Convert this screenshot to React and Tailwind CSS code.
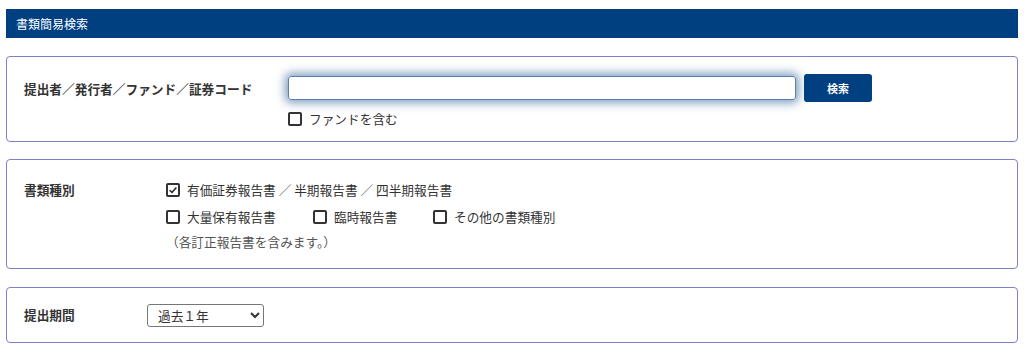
import React, { useState } from 'react';

const font = { fontFamily: '"Noto Sans CJK JP", "Noto Sans", sans-serif' };

const Check = ({ checked, onChange, label }) => (
    <label className="flex items-center gap-[7px] cursor-pointer select-none">
        <span
            onClick={onChange}
            className="w-[14px] h-[14px] border-2 border-[#333] rounded-[2px] bg-white flex items-center justify-center"
        >
            {checked && (
                <svg viewBox="0 0 12 12" className="w-[10px] h-[10px]">
                    <path d="M2 6.2 L4.8 9 L10 3" fill="none" stroke="#222" strokeWidth="1.8" />
                </svg>
            )}
        </span>
        <span>{label}</span>
    </label>
);

const Panel = ({ children, className }) => (
    <div className={`border border-[#7f7fcf] rounded-[4px] bg-white ${className}`}>{children}</div>
);

export default function App() {
    const [code, setCode] = useState('');
    const [fund, setFund] = useState(false);
    const [types, setTypes] = useState({ yuho: true, tairyo: false, rinji: false, other: false });
    const toggle = (k) => setTypes((t) => ({ ...t, [k]: !t[k] }));

    return (
        <div className="bg-white min-h-[350px] px-[6px] pt-[9px] text-[12.7px] text-[#333]" style={font}>
            {/* Header */}
            <div className="h-[29px] bg-[#003f80] text-white flex items-center pl-[10px] text-[12px]">
                書類簡易検索
            </div>

            {/* 提出者 */}
            <Panel className="mt-[18px] h-[86px] flex pl-[17px] pt-[17px]">
                <div className="w-[264px] font-bold pt-[3px] leading-[24px]">提出者／発行者／ファンド／証券コード</div>
                <div className="flex flex-col gap-[7px]">
                    <div className="flex items-center gap-[8px]">
                        <input
                            value={code}
                            onChange={(e) => setCode(e.target.value)}
                            className="w-[508px] h-[24px] border border-[#5a7fb0] rounded-[3px] px-2 outline-none shadow-[0_0_10px_3px_rgba(0,63,128,0.5)]"
                        />
                        <button className="w-[68px] h-[28px] rounded-[3px] bg-[#003f80] text-white font-bold text-[11px]">
                            検索
                        </button>
                    </div>
                    <Check checked={fund} onChange={() => setFund(!fund)} label="ファンドを含む" />
                </div>
            </Panel>

            {/* 書類種別 */}
            <Panel className="mt-[17px] h-[110px] flex pl-[17px] pt-[21px]">
                <div className="w-[142px] font-bold leading-[18px]">書類種別</div>
                <div className="flex flex-col leading-[18px]">
                    <Check checked={types.yuho} onChange={() => toggle('yuho')} label="有価証券報告書 ／ 半期報告書 ／ 四半期報告書" />
                    <div className="flex mt-[9px]">
                        <div className="w-[147px]">
                            <Check checked={types.tairyo} onChange={() => toggle('tairyo')} label="大量保有報告書" />
                        </div>
                        <div className="w-[120px]">
                            <Check checked={types.rinji} onChange={() => toggle('rinji')} label="臨時報告書" />
                        </div>
                        <Check checked={types.other} onChange={() => toggle('other')} label="その他の書類種別" />
                    </div>
                    <div className="mt-[7px] text-[#555]">（各訂正報告書を含みます。）</div>
                </div>
            </Panel>

            {/* 提出期間 */}
            <Panel className="mt-[18px] h-[56px] flex items-center pl-[17px]">
                <div className="w-[123px] font-bold">提出期間</div>
                <select className="w-[117px] h-[23px] border border-[#767676] rounded-[3px] pl-[6px] text-[12.7px] text-[#333] bg-white">
                    <option>過去１年</option>
                    <option>過去６ヶ月</option>
                    <option>過去３ヶ月</option>
                    <option>過去１ヶ月</option>
                </select>
            </Panel>
        </div>
    );
}
